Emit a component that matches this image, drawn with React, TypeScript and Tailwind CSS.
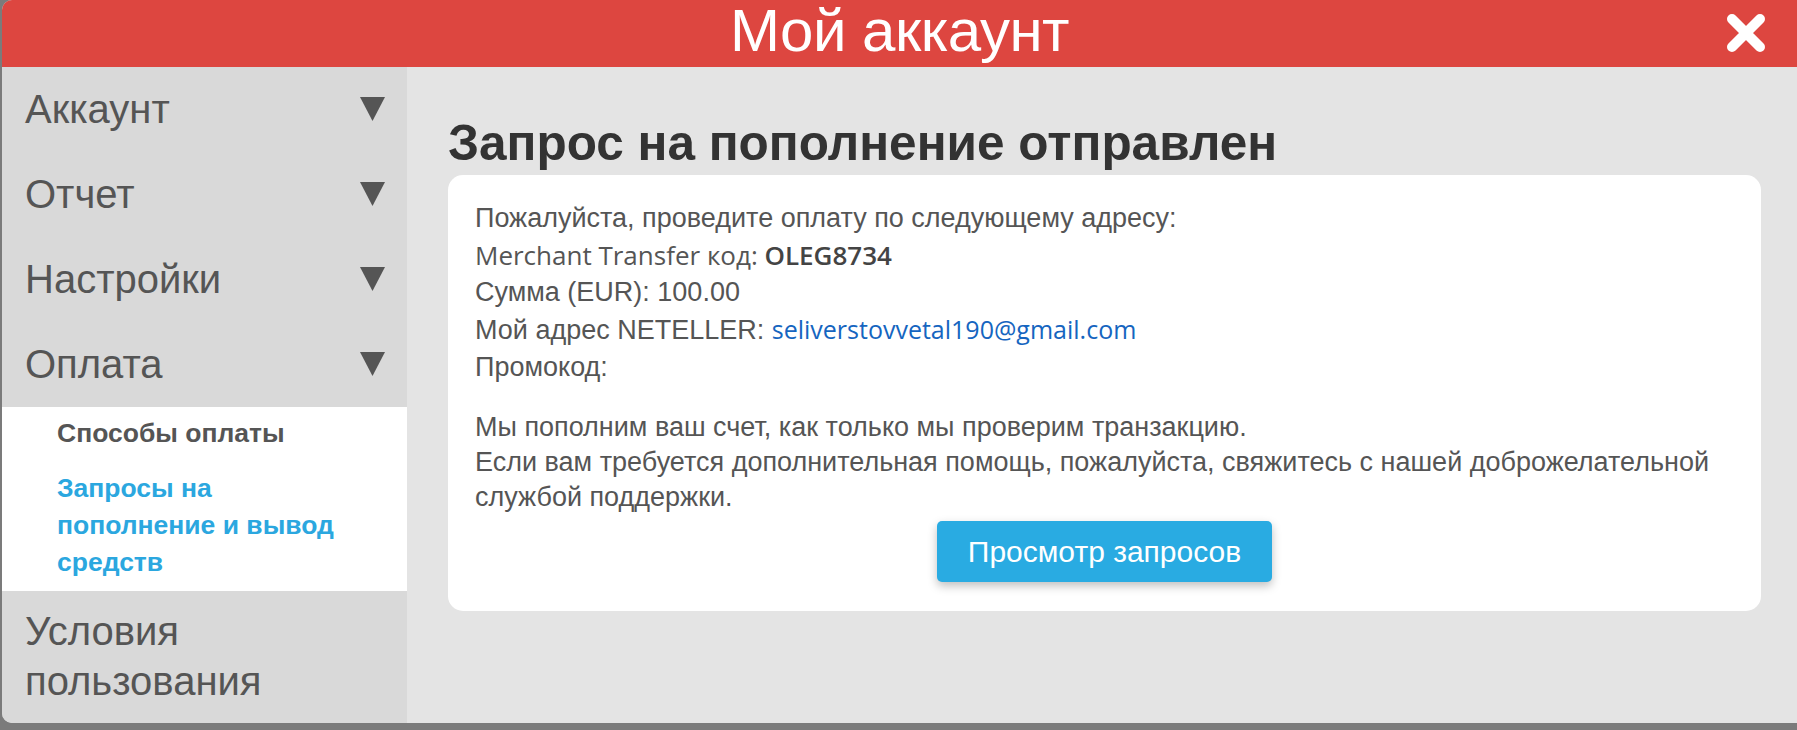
import React from "react";

const menu = ["Аккаунт", "Отчет", "Настройки", "Оплата"];

function Caret() {
  return (
    <svg width="25" height="24" viewBox="0 0 25 24">
      <polygon points="0,0 25,0 12.5,24" fill="#555555" />
    </svg>
  );
}

export default function App() {
  return (
    <div className="w-[1797px] h-[730px] overflow-hidden bg-[#7b7b7b] pl-[2px] font-['Liberation_Sans',Arial,sans-serif]">
      <div className="h-[723px] rounded-l-[10px] overflow-hidden flex flex-col bg-[#e4e4e4]">
        <div className="relative h-[67px] shrink-0 bg-[#dd4640] flex items-center justify-center">
          <h1 className="text-[60px] leading-[67px] -mt-[6px] tracking-[-0.5px] text-white">Мой аккаунт</h1>
          <svg
            className="absolute right-[31px] top-[13px]"
            width="40"
            height="40"
            viewBox="0 0 40 40"
          >
            <path d="M6 6 L34 34 M34 6 L6 34" stroke="#ffffff" strokeWidth="10" strokeLinecap="round" />
          </svg>
        </div>

        <div className="flex flex-1">
          <aside className="w-[405px] shrink-0 bg-[#d9d9d9] flex flex-col">
            {menu.map((m) => (
              <div
                key={m}
                className="h-[85px] flex items-center justify-between pl-[23px] pr-[22px] pb-[2px] text-[40px] leading-[46px] text-[#555555]"
              >
                <span>{m}</span>
                <Caret />
              </div>
            ))}
            <div className="bg-white h-[184px] pl-[55px] pr-[20px] pt-[8px] text-[26.5px] leading-[37px] font-bold">
              <div className="text-[#555555]">Способы оплаты</div>
              <div className="mt-[18px] text-[#2ba7df] w-[300px]">
                Запросы на пополнение и вывод средств
              </div>
            </div>
            <div className="pl-[23px] pt-[15px] text-[40px] leading-[50px] text-[#555555]">
              Условия
              <br />
              пользования
            </div>
          </aside>

          <main className="flex-1 pl-[41px] pr-[36px] pt-[47px]">
            <h2 className="text-[49.5px] leading-[58px] font-bold text-[#333333] mb-[3px]">
              Запрос на пополнение отправлен
            </h2>
            <div className="bg-white rounded-[15px] h-[436px] px-[27px] pt-[25px] text-[27px] text-[#555555]">
              <div className="leading-[37px]">
                <div>Пожалуйста, проведите оплату по следующему адресу:</div>
                <div className="font-['Open_Sans',sans-serif] text-[26px]">
                  Merchant Transfer код: <span className="font-semibold text-[#444444]">OLEG8734</span>
                </div>
                <div>Сумма (EUR): 100.00</div>
                <div>
                  Мой адрес NETELLER:{" "}
                  <span className="font-['Open_Sans',sans-serif] text-[25px] text-[#1565c0]">
                    seliverstovvetal190@gmail.com
                  </span>
                </div>
                <div>Промокод:</div>
              </div>
              <div className="mt-[24px] leading-[35px]">
                <div>Мы пополним ваш счет, как только мы проверим транзакцию.</div>
                <div>
                  Если вам требуется дополнительная помощь, пожалуйста, свяжитесь с нашей доброжелательной
                  <br />
                  службой поддержки.
                </div>
              </div>
              <div className="flex justify-center mt-[6px]">
                <button className="w-[335px] h-[61px] rounded-[5px] bg-[#29abe2] text-white text-[30px] shadow-[0_4px_10px_rgba(0,0,0,0.25)]">
                  Просмотр запросов
                </button>
              </div>
            </div>
          </main>
        </div>
      </div>
    </div>
  );
}
